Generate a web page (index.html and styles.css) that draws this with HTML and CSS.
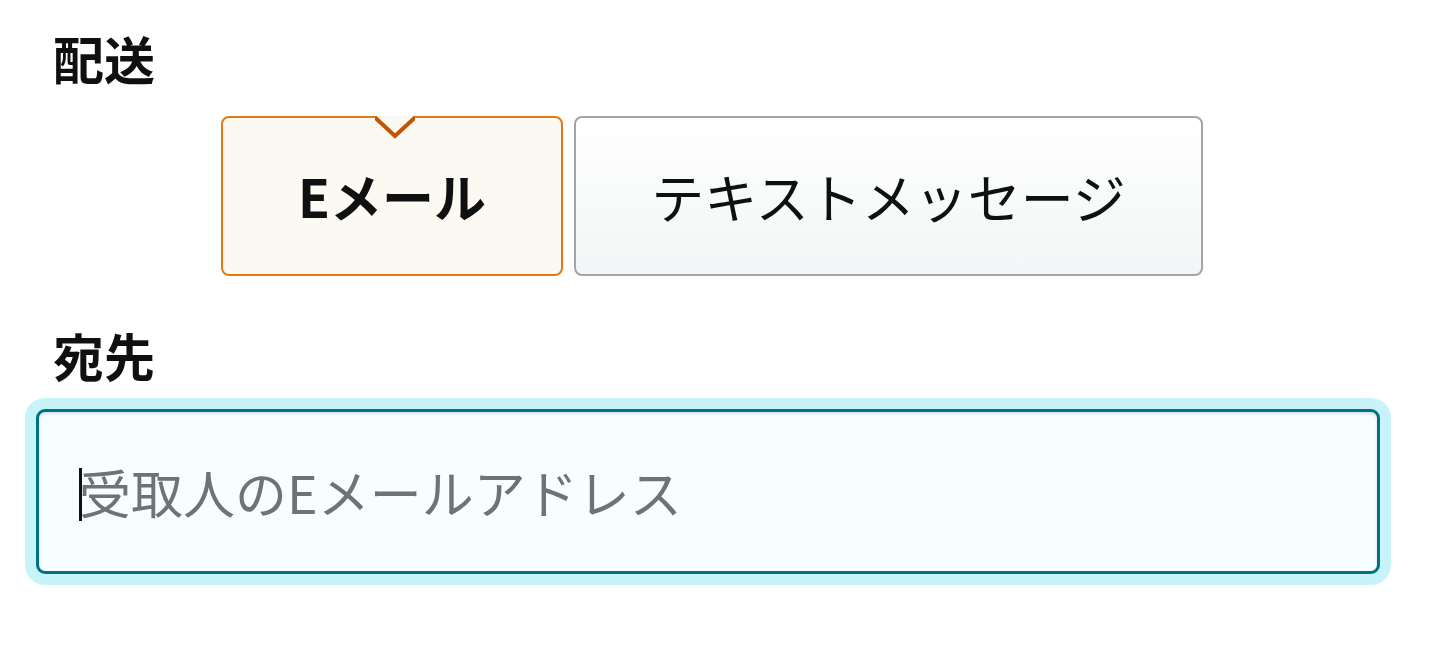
FILE: index.html
```html
<!DOCTYPE html>
<html lang="ja">
<head>
<meta charset="utf-8">
<link rel="stylesheet" href="styles.css">
</head>
<body>
<div class="page">
  <div class="label label-first">配送</div>
  <div class="toggle">
    <div class="btn btn-selected">
      <svg class="notch" width="40" height="24" viewBox="0 0 40 24">
        <polygon points="1,0 39,0 20,19" fill="#fcf8f2"/>
        <polyline points="0,1.5 20,20 40,1.5" fill="none" stroke="#c45500" stroke-width="4" stroke-linejoin="miter"/>
      </svg>
      <span class="btn-text bold">Eメール</span>
    </div>
    <div class="btn btn-normal">
      <span class="btn-text wide">テキストメッセージ</span>
    </div>
  </div>
  <div class="label label-second">宛先</div>
  <div class="field">
    <span class="caret"></span>
    <input class="input" type="text" placeholder="受取人のEメールアドレス">
  </div>
</div>
</body>
</html>
```

FILE: styles.css
```css
* { box-sizing: border-box; }
html, body { margin: 0; padding: 0; background: #ffffff; }
body {
  font-family: "Noto Sans CJK JP", "Noto Sans", sans-serif;
  color: #0f1111;
}
.page {
  padding: 0 60px 80px 36px;
}
.label {
  font-size: 51px;
  font-weight: 700;
  line-height: 60px;
  height: 60px;
  padding-left: 17px;
  color: #0f1111;
}
.label-first { margin-top: 28px; }
.label-second { margin-top: 49px; }
.toggle {
  display: flex;
  gap: 11px;
  margin-top: 28px;
  margin-left: 185px;
}
.btn {
  position: relative;
  height: 160px;
  border-radius: 8px;
  display: flex;
  align-items: center;
  justify-content: center;
}
.btn-selected {
  width: 342px;
  border: 2px solid #e47911;
  background: #fcf8f2;
}
.btn-normal {
  width: 629px;
  border: 2px solid #a2a6ac;
  background: linear-gradient(#ffffff, #f3f5f6);
}
.notch {
  position: absolute;
  top: -2px;
  left: 50%;
  margin-left: -17px;
}
.btn-text {
  font-size: 52px;
  line-height: 60px;
  color: #0f1111;
}
.btn-text.wide { font-size: 53px; }
.bold { font-weight: 700; }
.field {
  position: relative;
  margin-top: 24px;
  height: 165px;
  border: 3px solid #007185;
  border-radius: 9px;
  background: #f7feff;
  box-shadow: 0 0 0 11px #c8f4f9, inset 0 2px 3px rgba(15, 17, 17, 0.12);
  display: flex;
  align-items: center;
}
.input {
  width: 100%;
  border: 0;
  outline: none;
  background: transparent;
  font-family: "Noto Sans CJK JP", "Noto Sans", sans-serif;
  font-size: 52px;
  padding: 0 0 0 40px;
  color: #0f1111;
}
.input::placeholder { color: #6f7373; }
.caret {
  position: absolute;
  left: 40px;
  top: 56px;
  width: 3px;
  height: 53px;
  background: #0f1111;
}
```
